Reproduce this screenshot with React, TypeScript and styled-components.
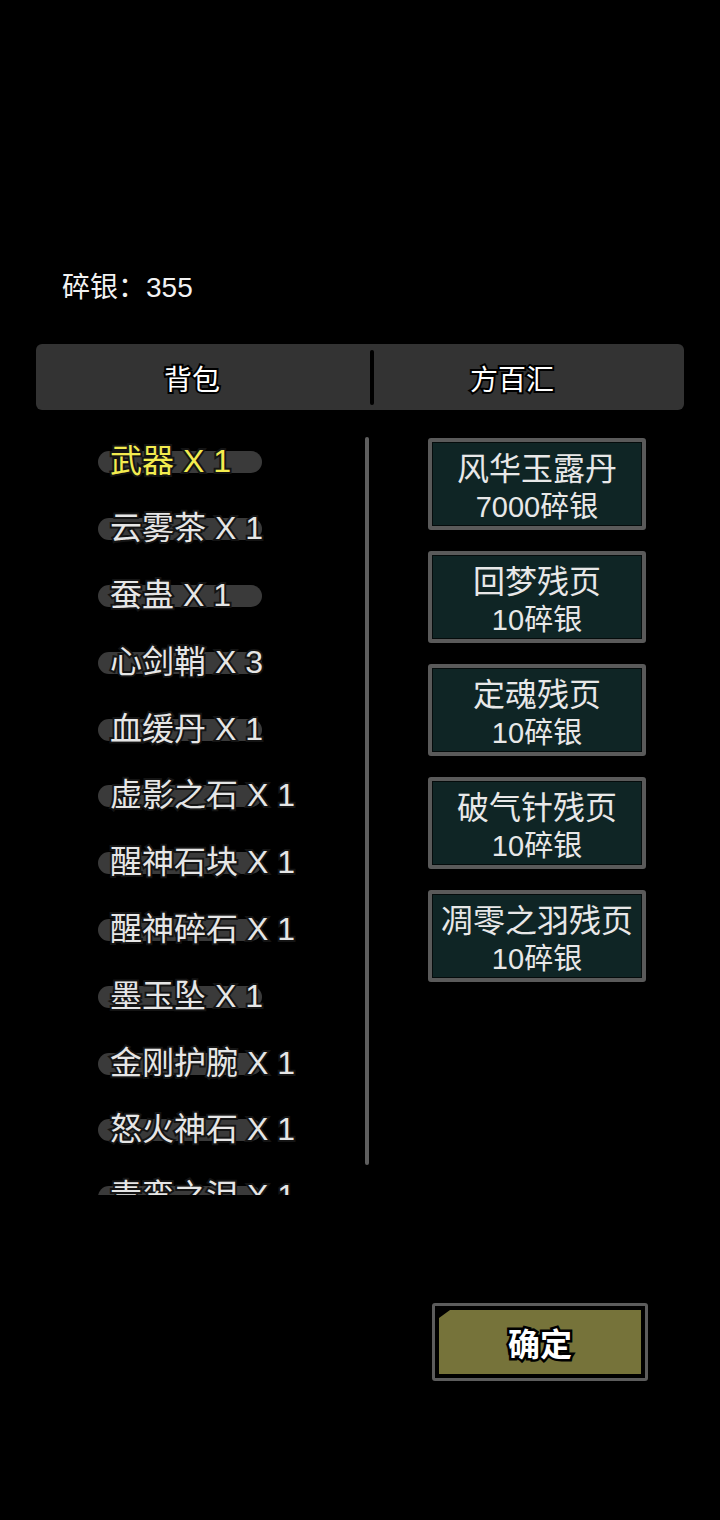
import { ReactElement } from "react";
import styled, { createGlobalStyle } from "styled-components";

const bagItems = [
  { name: "武器", count: 1 },
  { name: "云雾茶", count: 1 },
  { name: "蚕蛊", count: 1 },
  { name: "心剑鞘", count: 3 },
  { name: "血缓丹", count: 1 },
  { name: "虚影之石", count: 1 },
  { name: "醒神石块", count: 1 },
  { name: "醒神碎石", count: 1 },
  { name: "墨玉坠", count: 1 },
  { name: "金刚护腕", count: 1 },
  { name: "怒火神石", count: 1 },
  { name: "青鸾之泪", count: 1 },
];

const shopItems = [
  { name: "风华玉露丹", price: 7000 },
  { name: "回梦残页", price: 10 },
  { name: "定魂残页", price: 10 },
  { name: "破气针残页", price: 10 },
  { name: "凋零之羽残页", price: 10 },
];

function App(): ReactElement {
  return (
    <Page>
      <GlobalStyle />
      <Silver>碎银：355</Silver>

      <TabBar>
        <Tab padRight={22}>背包</Tab>
        <TabDivider />
        <Tab padRight={34}>方百汇</Tab>
      </TabBar>

      <Body>
        <BagList>
          {bagItems.map((item, i) => (
            <BagRow key={item.name}>
              <BagLabel selected={i === 0}>
                {item.name} X {item.count}
              </BagLabel>
            </BagRow>
          ))}
        </BagList>
        <ScrollBar />
        <ShopColumn>
          {shopItems.map((item) => (
            <ShopCard key={item.name}>
              <ShopName>{item.name}</ShopName>
              <ShopPrice>{item.price}碎银</ShopPrice>
            </ShopCard>
          ))}
        </ShopColumn>
      </Body>

      <Footer>
        <ConfirmButton>
          <ConfirmFill>确定</ConfirmFill>
        </ConfirmButton>
      </Footer>
    </Page>
  );
}

const GlobalStyle = createGlobalStyle`
  body {
    margin: 0;
    background: #000;
    font-family: "Liberation Sans", "Noto Sans CJK SC", sans-serif;
  }
`;

const Page = styled.div`
  width: 720px;
  min-height: 1520px;
  background: #000;
  padding-top: 270px;
  box-sizing: border-box;
`;

const Silver = styled.div`
  margin-left: 62px;
  height: 36px;
  line-height: 36px;
  font-size: 28px;
  color: #f2f2f2;
`;

const TabBar = styled.div`
  margin: 38px 36px 0;
  height: 66px;
  background: #333333;
  border-radius: 6px;
  display: grid;
  grid-template-columns: 334px 4px 1fr;
  align-items: center;
`;

const Tab = styled.div<{ padRight: number }>`
  text-align: center;
  padding-right: ${(p) => p.padRight}px;
  padding-top: 7px;
  font-size: 28px;
  color: #fff;
  -webkit-text-stroke: 4px #000;
  paint-order: stroke fill;
  line-height: 59px;
`;

const TabDivider = styled.div`
  height: 55px;
  background: #000;
  border-radius: 2px;
`;

const Body = styled.div`
  margin-top: 18px;
  display: flex;
  align-items: flex-start;
`;

const BagList = styled.div`
  width: 365px;
  height: 767px;
  overflow: hidden;
`;

const BagRow = styled.div`
  height: 66.8px;
  display: flex;
  align-items: center;
  padding-left: 98px;
  box-sizing: border-box;
  isolation: isolate;
`;

const BagLabel = styled.span<{ selected: boolean }>`
  position: relative;
  padding-left: 12px;
  font-size: 32px;
  line-height: 40px;
  white-space: pre;
  color: ${(p) => (p.selected ? "#f3ec4f" : "#e6e6e6")};
  -webkit-text-stroke: 4px #141414;
  paint-order: stroke fill;

  &::before {
    content: "";
    position: absolute;
    left: 0;
    top: 10px;
    width: 164px;
    height: 22px;
    border-radius: 11px;
    background: #3a3a3a;
    z-index: -1;
  }
`;

const ScrollBar = styled.div`
  width: 4px;
  height: 728px;
  margin-top: 9px;
  border-radius: 2px;
  background: #5e5e5e;
`;

const ShopColumn = styled.div`
  margin-left: 59px;
  margin-top: 10px;
  display: flex;
  flex-direction: column;
  gap: 21px;
`;

const ShopCard = styled.div`
  width: 218px;
  height: 92px;
  box-sizing: border-box;
  border: 4px solid #5a5a5a;
  border-radius: 3px;
  background: #0f2525;
  box-shadow: inset 0 0 0 1px #050c0c;
  display: flex;
  flex-direction: column;
  align-items: center;
  justify-content: center;
  padding-top: 8px;
  color: #e8e8e8;
`;

const ShopName = styled.div`
  font-size: 32px;
  line-height: 38px;
  white-space: nowrap;
`;

const ShopPrice = styled.div`
  font-size: 29px;
  line-height: 39px;
`;

const Footer = styled.div`
  margin-top: 108px;
  display: flex;
  justify-content: flex-end;
  padding-right: 72px;
`;

const ConfirmButton = styled.div`
  width: 216px;
  height: 78px;
  box-sizing: border-box;
  border: 3px solid #5c5c5c;
  border-radius: 3px;
  background: #000;
  padding: 4px;
`;

const ConfirmFill = styled.div`
  height: 100%;
  background: #76733a;
  clip-path: polygon(11px 0, 100% 0, 100% 100%, 0 100%, 0 8px);
  display: flex;
  align-items: center;
  justify-content: center;
  font-size: 32px;
  font-weight: 700;
  color: #fff;
  -webkit-text-stroke: 5px #000;
  paint-order: stroke fill;
`;

export default App;
